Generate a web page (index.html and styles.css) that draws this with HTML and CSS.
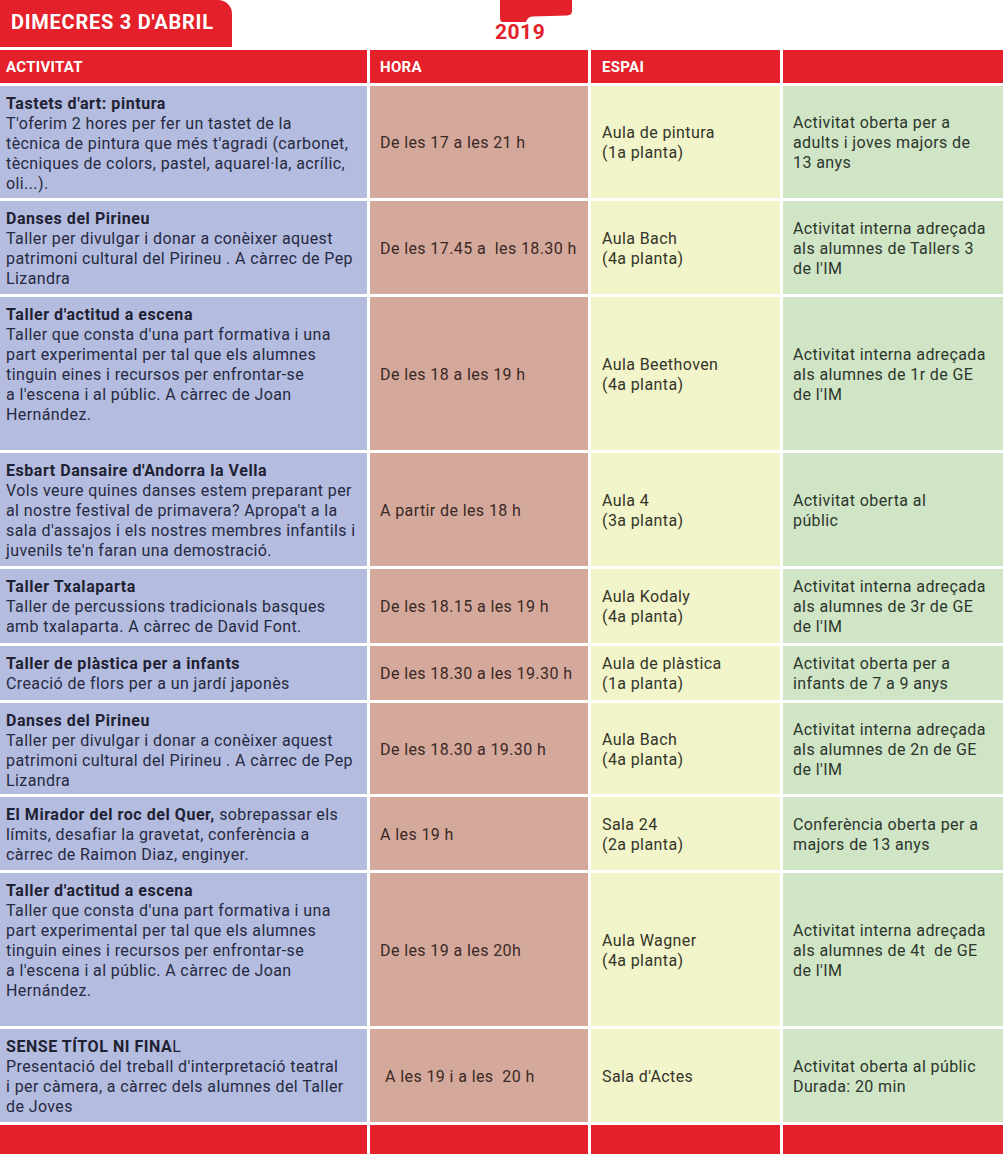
FILE: index.html
```html
<!DOCTYPE html>
<html lang="ca">
<head>
<meta charset="utf-8">
<title>Dimecres 3 d'abril</title>
<link rel="stylesheet" href="styles.css">
</head>
<body>
<div class="top">
  <div class="tab">DIMECRES 3 D'ABRIL</div>
  <div class="logo">
    <svg width="90" height="46" viewBox="0 0 90 46" xmlns="http://www.w3.org/2000/svg">
      <path d="M8 0 H80 V11 Q80 15 75 15.5 L40 16.5 Q36 17 35 20 L34 22 H10 Q8 21 8 18 Z" fill="#e4202a"/>
      <text x="3" y="39" class="logo-text">2019</text>
    </svg>
  </div>
</div>
<div class="grid">
  <div class="hd">ACTIVITAT</div>
  <div class="hd">HORA</div>
  <div class="hd">ESPAI</div>
  <div class="hd"></div>

  <div class="c1"><b>Tastets d'art: pintura</b><br>T'oferim 2 hores per fer un tastet de la<br>tècnica de pintura que més t'agradi (carbonet,<br>tècniques de colors, pastel, aquarel·la, acrílic,<br>oli...).</div>
  <div class="c2">De les 17 a les 21 h</div>
  <div class="c3">Aula de pintura<br>(1a planta)</div>
  <div class="c4">Activitat oberta per a<br>adults i joves majors de<br>13 anys</div>

  <div class="c1"><b>Danses del Pirineu</b><br>Taller per divulgar i donar a conèixer aquest<br>patrimoni cultural del Pirineu . A càrrec de Pep<br>Lizandra</div>
  <div class="c2">De les 17.45 a&nbsp; les 18.30 h</div>
  <div class="c3">Aula Bach<br>(4a planta)</div>
  <div class="c4">Activitat interna adreçada<br>als alumnes de Tallers 3<br>de l'IM</div>

  <div class="c1"><b>Taller d'actitud a escena</b><br>Taller que consta d'una part formativa i una<br>part experimental per tal que els alumnes<br>tinguin eines i recursos per enfrontar-se<br>a l'escena i al públic. A càrrec de Joan<br>Hernández.</div>
  <div class="c2">De les 18 a les 19 h</div>
  <div class="c3">Aula Beethoven<br>(4a planta)</div>
  <div class="c4">Activitat interna adreçada<br>als alumnes de 1r de GE<br>de l'IM</div>

  <div class="c1"><b>Esbart Dansaire d'Andorra la Vella</b><br>Vols veure quines danses estem preparant per<br>al nostre festival de primavera? Apropa't a la<br>sala d'assajos i els nostres membres infantils i<br>juvenils te'n faran una demostració.</div>
  <div class="c2">A partir de les 18 h</div>
  <div class="c3">Aula 4<br>(3a planta)</div>
  <div class="c4">Activitat oberta al<br>públic</div>

  <div class="c1"><b>Taller Txalaparta</b><br>Taller de percussions tradicionals basques<br>amb txalaparta. A càrrec de David Font.</div>
  <div class="c2">De les 18.15 a les 19 h</div>
  <div class="c3">Aula Kodaly<br>(4a planta)</div>
  <div class="c4">Activitat interna adreçada<br>als alumnes de 3r de GE<br>de l'IM</div>

  <div class="c1"><b>Taller de plàstica per a infants</b><br>Creació de flors per a un jardí japonès</div>
  <div class="c2">De les 18.30 a les 19.30 h</div>
  <div class="c3">Aula de plàstica<br>(1a planta)</div>
  <div class="c4">Activitat oberta per a<br>infants de 7 a 9 anys</div>

  <div class="c1"><b>Danses del Pirineu</b><br>Taller per divulgar i donar a conèixer aquest<br>patrimoni cultural del Pirineu . A càrrec de Pep<br>Lizandra</div>
  <div class="c2">De les 18.30 a 19.30 h</div>
  <div class="c3">Aula Bach<br>(4a planta)</div>
  <div class="c4">Activitat interna adreçada<br>als alumnes de 2n de GE<br>de l'IM</div>

  <div class="c1"><b>El Mirador del roc del Quer,</b> sobrepassar els<br>límits, desafiar la gravetat, conferència a<br>càrrec de Raimon Diaz, enginyer.</div>
  <div class="c2">A les 19 h</div>
  <div class="c3">Sala 24<br>(2a planta)</div>
  <div class="c4">Conferència oberta per a<br>majors de 13 anys</div>

  <div class="c1"><b>Taller d'actitud a escena</b><br>Taller que consta d'una part formativa i una<br>part experimental per tal que els alumnes<br>tinguin eines i recursos per enfrontar-se<br>a l'escena i al públic. A càrrec de Joan<br>Hernández.</div>
  <div class="c2">De les 19 a les 20h</div>
  <div class="c3">Aula Wagner<br>(4a planta)</div>
  <div class="c4">Activitat interna adreçada<br>als alumnes de 4t&nbsp; de GE<br>de l'IM</div>

  <div class="c1"><b>SENSE TÍTOL NI FINA<span class="light">L</span></b><br>Presentació del treball d'interpretació teatral<br>i per càmera, a càrrec dels alumnes del Taller<br>de Joves</div>
  <div class="c2 shift">A les 19 i a les&nbsp; 20 h</div>
  <div class="c3">Sala d'Actes</div>
  <div class="c4">Activitat oberta al públic<br>Durada: 20 min</div>

  <div class="ft"></div>
  <div class="ft"></div>
  <div class="ft"></div>
  <div class="ft"></div>
</div>
</body>
</html>
```
FILE: styles.css
```css
html, body {
  margin: 0;
  padding: 0;
  background: #ffffff;
}

body {
  width: 1003px;
  height: 1154px;
  overflow: hidden;
  font-family: Roboto, "Noto Sans", "Liberation Sans", sans-serif;
  font-size: 16px;
  line-height: 20px;
  letter-spacing: 0.4px;
  color: #2c2c38;
}

.top {
  display: flex;
  align-items: flex-start;
  height: 47px;
}

.tab {
  width: 232px;
  height: 47px;
  box-sizing: border-box;
  background: #e4202a;
  border-top-right-radius: 14px;
  color: #ffffff;
  font-weight: 700;
  font-size: 20px;
  letter-spacing: 0.75px;
  padding: 10px 0 0 11px;
  line-height: 24px;
}

.logo {
  margin-left: 260px;
  height: 46px;
}

.logo svg {
  display: block;
}

.logo-text {
  font-family: Roboto, "Liberation Sans", sans-serif;
  font-weight: 700;
  font-size: 21px;
  letter-spacing: 0.5px;
  fill: #e4202a;
}

.grid {
  margin-top: 3px;
  display: grid;
  grid-template-columns: 367px 218px 189px 220px;
  grid-template-rows: 33px 112px 93px 153px 113px 74px 54px 91px 73px 153px 93px 30px;
  gap: 3px;
}

.hd {
  background: #e4202a;
  color: #ffffff;
  font-weight: 700;
  font-size: 15px;
  letter-spacing: 0.3px;
  display: flex;
  align-items: center;
  padding-left: 6px;
}

.hd:nth-child(2) { padding-left: 10px; }
.hd:nth-child(3) { padding-left: 11px; }

.c1, .c2, .c3, .c4 {
  white-space: nowrap;
  overflow: hidden;
}

.c1 {
  background: #b4bce0;
  padding: 8px 0 0 6px;
  color: #262a40;
}

.c1 b {
  font-weight: 700;
  letter-spacing: 0.55px;
  color: #1f2232;
}

.c2, .c3, .c4 {
  display: flex;
  align-items: center;
  padding-top: 2px;
  box-sizing: border-box;
}

.c2 {
  background: #d4a99c;
  padding-left: 10px;
  color: #3a2824;
}

.c2.shift {
  padding-left: 15px;
}

.c3 {
  background: #f2f4c9;
  padding-left: 11px;
  color: #34342a;
}

.c4 {
  background: #d0e4c6;
  padding-left: 10px;
  color: #2c362c;
}

.light {
  font-weight: 400;
}

.ft {
  background: #e4202a;
}
```
